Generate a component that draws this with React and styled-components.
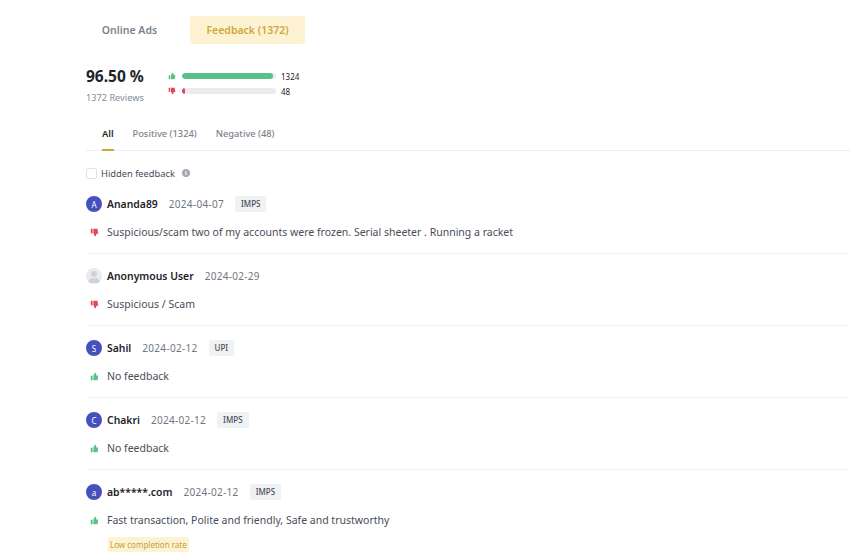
import React from 'react';
import styled, { createGlobalStyle } from 'styled-components';

const Global = createGlobalStyle`
  html, body { margin: 0; padding: 0; background: #fff; overflow: hidden; }
  body { font-family: "Noto Sans", "Liberation Sans", sans-serif; color: #1e2329; }
`;

const Page = styled.div`
  width: 850px;
  height: 554px;
  overflow: hidden;
  padding: 16px 0 0 86px;
  box-sizing: border-box;
`;

const TopTabs = styled.div`
  display: flex;
  gap: 17px;
  height: 28px;
`;

const TopTab = styled.div`
  display: flex;
  align-items: center;
  justify-content: center;
  width: ${p => p.$w}px;
  padding-bottom: 1px;
  box-sizing: border-box;
  border-radius: 3px;
  font-size: 10.5px;
  font-weight: 600;
  color: ${p => (p.$active ? '#d0a73a' : '#7c838c')};
  background: ${p => (p.$active ? '#fdf3d2' : 'transparent')};
`;

const Summary = styled.div`
  display: flex;
  margin-top: 22px;
  height: 39px;
`;

const Score = styled.div`
  width: 82px;
`;

const Percent = styled.div`
  font-size: 15.5px;
  line-height: 20px;
  font-weight: 700;
`;

const Reviews = styled.div`
  margin-top: 5px;
  font-size: 9.2px;
  line-height: 14px;
  color: #848e9c;
`;

const Bars = styled.div`
  display: flex;
  flex-direction: column;
  gap: 7px;
  padding-top: 6px;
`;

const BarRow = styled.div`
  display: flex;
  align-items: center;
  height: 8px;
`;

const Track = styled.div`
  width: 94px;
  height: 6px;
  margin-left: 6px;
  border-radius: 3px;
  background: #eaecef;
  overflow: hidden;
`;

const Fill = styled.div`
  height: 100%;
  border-radius: 3px;
  background: ${p => p.$color};
`;

const BarCount = styled.span`
  margin-left: 5px;
  font-size: 8px;
  color: #1e2329;
`;

const SubTabs = styled.div`
  display: flex;
  gap: 19px;
  height: 26px;
  margin-top: 19px;
  padding-left: 16px;
  border-bottom: 1px solid #eaecef;
`;

const SubTab = styled.div`
  position: relative;
  font-size: 9.3px;
  line-height: 20px;
  font-weight: ${p => (p.$active ? 600 : 500)};
  color: ${p => (p.$active ? '#1e2329' : '#7c838c')};
  ${p => p.$active && `
    &::after {
      content: '';
      position: absolute;
      left: 0;
      right: 0;
      top: 25px;
      height: 2px;
      background: #c9a93c;
    }
  `}
`;

const HiddenRow = styled.div`
  display: flex;
  align-items: center;
  height: 12px;
  margin-top: 16px;
  font-size: 9.3px;
  color: #474d57;
`;

const Checkbox = styled.span`
  width: 9px;
  height: 9px;
  border: 1px solid #dfe2e6;
  border-radius: 2px;
  margin-right: 4px;
`;

const Info = styled.span`
  display: inline-flex;
  align-items: center;
  justify-content: center;
  width: 8px;
  height: 8px;
  margin-left: 7px;
  border-radius: 50%;
  background: #a5abb3;
  color: #fff;
  font-size: 6px;
  font-weight: 700;
  line-height: 1;
`;

const List = styled.div`
  margin-top: 3px;
`;

const Item = styled.div`
  box-sizing: border-box;
  height: 72px;
  padding-top: 14px;
  border-bottom: ${p => (p.$last ? 'none' : '1px solid #f2f3f5')};
`;

const Head = styled.div`
  display: flex;
  align-items: center;
  height: 16px;
`;

const Avatar = styled.span`
  display: flex;
  align-items: center;
  justify-content: center;
  width: 16px;
  height: 16px;
  border-radius: 50%;
  margin-right: 5px;
  overflow: hidden;
  background: ${p => (p.$anon ? '#e9ebee' : '#4650bd')};
  color: #fff;
  font-size: 8px;
`;

const Name = styled.span`
  font-size: 10.4px;
  font-weight: 600;
  color: #1e2329;
`;

const DateText = styled.span`
  margin-left: 11px;
  font-size: 10px;
  color: #6f7781;
  letter-spacing: 0.3px;
`;

const Badge = styled.span`
  margin-left: 11px;
  padding: 0 6px;
  height: 16px;
  line-height: 16px;
  border-radius: 2px;
  background: #eff1f3;
  font-size: 8px;
  font-weight: 500;
  color: #474d57;
`;

const Body = styled.div`
  display: flex;
  align-items: center;
  height: 14px;
  margin-top: 13px;
  font-size: 10.5px;
  color: #474d57;
`;

const ThumbBox = styled.span`
  display: flex;
  justify-content: center;
  width: 16px;
  margin-right: 5px;
`;

const Flag = styled.span`
  display: inline-block;
  margin: 10px 0 0 22px;
  padding: 0 2px;
  height: 15px;
  line-height: 15px;
  background: #fdf3d2;
  border-radius: 2px;
  font-size: 8px;
  color: #c99f34;
`;

const Thumb = ({ down, size = 8 }) => (
  <svg
    width={size}
    height={size}
    viewBox="0 0 24 24"
    fill={down ? '#e0475a' : '#58c088'}
    style={down ? { transform: 'scaleY(-1)' } : undefined}
  >
    <path d="M2 10h5v12H2zM9 22V10l4-8c2 0 3.5 1.5 3.500 3.500V9H22l-2 13H9z" />
  </svg>
);

const reviews = [
  { name: 'Ananda89', letter: 'A', date: '2024-04-07', method: 'IMPS', down: true, text: 'Suspicious/scam two of my accounts were frozen. Serial sheeter . Running a racket' },
  { name: 'Anonymous User', anon: true, date: '2024-02-29', down: true, text: 'Suspicious / Scam' },
  { name: 'Sahil', letter: 'S', date: '2024-02-12', method: 'UPI', text: 'No feedback' },
  { name: 'Chakri', letter: 'C', date: '2024-02-12', method: 'IMPS', text: 'No feedback' },
  { name: 'ab*****.com', letter: 'a', date: '2024-02-12', method: 'IMPS', text: 'Fast transaction, Polite and friendly, Safe and trustworthy', flag: 'Low completion rate' },
];

export default function App() {
  return (
    <Page>
      <Global />
      <TopTabs>
        <TopTab $w={87}>Online Ads</TopTab>
        <TopTab $w={115} $active>Feedback (1372)</TopTab>
      </TopTabs>
      <Summary>
        <Score>
          <Percent>96.50 %</Percent>
          <Reviews>1372 Reviews</Reviews>
        </Score>
        <Bars>
          <BarRow>
            <Thumb />
            <Track><Fill $color="#58c088" style={{ width: '96.5%' }} /></Track>
            <BarCount>1324</BarCount>
          </BarRow>
          <BarRow>
            <Thumb down />
            <Track><Fill $color="#e0475a" style={{ width: '3.5%' }} /></Track>
            <BarCount>48</BarCount>
          </BarRow>
        </Bars>
      </Summary>
      <SubTabs>
        <SubTab $active>All</SubTab>
        <SubTab>Positive (1324)</SubTab>
        <SubTab>Negative (48)</SubTab>
      </SubTabs>
      <HiddenRow>
        <Checkbox />
        Hidden feedback
        <Info>i</Info>
      </HiddenRow>
      <List>
        {reviews.map((r, i) => (
          <Item key={r.name} $last={i === reviews.length - 1}>
            <Head>
              <Avatar $anon={r.anon}>
                {r.anon ? (
                  <svg width="12" height="14" viewBox="0 0 12 14" fill="#cfd3d8">
                    <circle cx="6" cy="5" r="3" />
                    <path d="M0 14c0-3.500 2.500-5 6-5s6 1.500 6 5z" />
                  </svg>
                ) : r.letter}
              </Avatar>
              <Name>{r.name}</Name>
              <DateText>{r.date}</DateText>
              {r.method && <Badge>{r.method}</Badge>}
            </Head>
            <Body>
              <ThumbBox><Thumb down={r.down} size={9} /></ThumbBox>
              {r.text}
            </Body>
            {r.flag && <Flag>{r.flag}</Flag>}
          </Item>
        ))}
      </List>
    </Page>
  );
}
